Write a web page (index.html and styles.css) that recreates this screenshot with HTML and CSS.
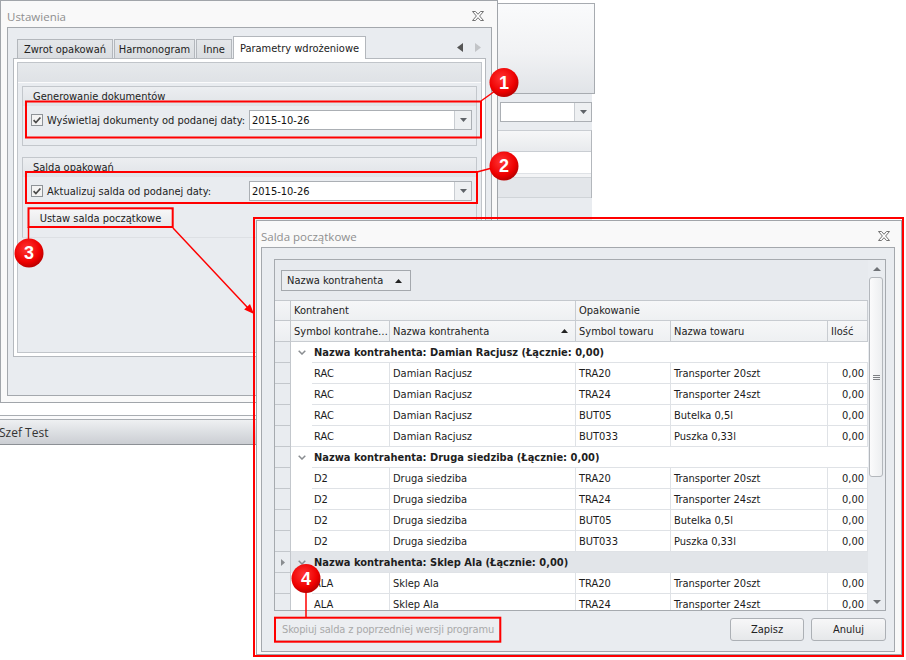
FILE: index.html
```html
<!DOCTYPE html>
<html lang="pl">
<head>
<meta charset="utf-8">
<title>Salda początkowe</title>
<link rel="stylesheet" href="styles.css">
</head>
<body>
<div class="desk">

  <!-- background application window -->
  <div class="app">
    <div class="ribbon"></div>
    <div class="app-body">
      <div class="app-form">
        <div class="app-combo"><span class="app-combo-btn"><svg width="7" height="4" viewBox="0 0 7 4"><path d="M0 0h7L3.5 4z" fill="#5f6368"/></svg></span></div>
        <div class="app-grid">
          <div class="ag-head"></div>
          <div class="ag-row"></div>
          <div class="ag-gap"></div>
          <div class="ag-group"></div>
        </div>
      </div>
    </div>
    <div class="statusbar"><div class="sb-inner">Szef Test</div></div>
  </div>

  <!-- Ustawienia dialog -->
  <div class="dlg settings">
    <div class="dlg-title">
      <span>Ustawienia</span>
      <svg class="x-ico" width="12" height="10" viewBox="0 0 12 10"><path d="M0.5 0.5h3l2.5 2.8 2.5-2.8h3L7.6 5l3.9 4.5h-3L6 6.7 3.5 9.5h-3L4.4 5z" fill="#fff" stroke="#727272" stroke-width="1" stroke-linejoin="round"/></svg>
    </div>
    <div class="panel">
      <div class="tabs">
        <div class="tab t1">Zwrot opakowań</div>
        <div class="tab t2">Harmonogram</div>
        <div class="tab t3">Inne</div>
        <div class="tab t4 active">Parametry wdrożeniowe</div>
        <div class="tab-nav">
          <svg width="6" height="9" viewBox="0 0 6 9"><path d="M6 0v9L0 4.5z" fill="#555"/></svg>
          <svg width="6" height="9" viewBox="0 0 6 9"><path d="M0 0v9l6-4.5z" fill="#c2c4c7"/></svg>
        </div>
      </div>
      <div class="tabpage">
        <div class="tabpage-in">
          <div class="band"></div>
          <div class="group g1">
            <div class="group-cap">Generowanie dokumentów</div>
            <div class="group-body">
              <div class="opt-row">
                <label class="chk"><svg width="12" height="12" viewBox="0 0 12 12"><rect x="0.5" y="0.5" width="11" height="11" fill="#f3f3f3" stroke="#8e9398"/><path d="M2.6 6.1l2.3 2.4 4.5-5" fill="none" stroke="#4a4a4a" stroke-width="1.7"/></svg>Wyświetlaj dokumenty od podanej daty:</label>
                <div class="combo"><span class="combo-val">2015-10-26</span><span class="combo-btn"><svg width="7" height="4" viewBox="0 0 7 4"><path d="M0 0h7L3.5 4z" fill="#5f6368"/></svg></span></div>
              </div>
            </div>
          </div>
          <div class="group g2">
            <div class="group-cap">Salda opakowań</div>
            <div class="group-body">
              <div class="opt-row">
                <label class="chk"><svg width="12" height="12" viewBox="0 0 12 12"><rect x="0.5" y="0.5" width="11" height="11" fill="#f3f3f3" stroke="#8e9398"/><path d="M2.6 6.1l2.3 2.4 4.5-5" fill="none" stroke="#4a4a4a" stroke-width="1.7"/></svg>Aktualizuj salda od podanej daty:</label>
                <div class="combo"><span class="combo-val">2015-10-26</span><span class="combo-btn"><svg width="7" height="4" viewBox="0 0 7 4"><path d="M0 0h7L3.5 4z" fill="#5f6368"/></svg></span></div>
              </div>
              <button class="btn btn-ustaw">Ustaw salda początkowe</button>
            </div>
          </div>
        </div>
      </div>
    </div>
  </div>

  <!-- Salda początkowe dialog -->
  <div class="dlg saldo">
    <div class="dlg-title">
      <span>Salda początkowe</span>
      <svg class="x-ico" width="12" height="10" viewBox="0 0 12 10"><path d="M0.5 0.5h3l2.5 2.8 2.5-2.8h3L7.6 5l3.9 4.5h-3L6 6.7 3.5 9.5h-3L4.4 5z" fill="#fff" stroke="#727272" stroke-width="1" stroke-linejoin="round"/></svg>
    </div>
    <div class="panel">
      <div class="grid">
        <div class="grid-main">
          <div class="gpanel">
            <div class="gp-box"><span>Nazwa kontrahenta</span><svg width="7" height="4" viewBox="0 0 7 4"><path d="M0 4h7L3.5 0z" fill="#222"/></svg></div>
          </div>
          <div class="hrow band-row">
            <div class="ind"></div>
            <div class="hc w-k">Kontrahent</div>
            <div class="hc w-o">Opakowanie</div>
          </div>
          <div class="hrow col-row">
            <div class="ind"></div>
            <div class="hc c-sym">Symbol kontrahe…</div>
            <div class="hc c-naz"><span>Nazwa kontrahenta</span><svg class="sort" width="7" height="4" viewBox="0 0 7 4"><path d="M0 4h7L3.5 0z" fill="#222"/></svg></div>
            <div class="hc c-st">Symbol towaru</div>
            <div class="hc c-nt">Nazwa towaru</div>
            <div class="hc c-il">Ilość</div>
          </div>
          <div class="gbody">
            <div class="row grp">
              <div class="ind"></div>
              <div class="chev"><svg width="8" height="5" viewBox="0 0 8 5"><path d="M0.7 0.7L4 4l3.3-3.3" fill="none" stroke="#8a8d91" stroke-width="1.5"/></svg></div>
              <div class="gtext">Nazwa kontrahenta: Damian Racjusz (Łącznie: 0,00)</div>
            </div>
            <div class="row drow"><div class="ind"></div><div class="indent"></div><div class="dc d-sym">RAC</div><div class="dc d-naz">Damian Racjusz</div><div class="dc d-st">TRA20</div><div class="dc d-nt">Transporter 20szt</div><div class="dc d-il">0,00</div></div>
            <div class="row drow"><div class="ind"></div><div class="indent"></div><div class="dc d-sym">RAC</div><div class="dc d-naz">Damian Racjusz</div><div class="dc d-st">TRA24</div><div class="dc d-nt">Transporter 24szt</div><div class="dc d-il">0,00</div></div>
            <div class="row drow"><div class="ind"></div><div class="indent"></div><div class="dc d-sym">RAC</div><div class="dc d-naz">Damian Racjusz</div><div class="dc d-st">BUT05</div><div class="dc d-nt">Butelka 0,5l</div><div class="dc d-il">0,00</div></div>
            <div class="row drow last"><div class="ind"></div><div class="indent"></div><div class="dc d-sym">RAC</div><div class="dc d-naz">Damian Racjusz</div><div class="dc d-st">BUT033</div><div class="dc d-nt">Puszka 0,33l</div><div class="dc d-il">0,00</div></div>
            <div class="row grp">
              <div class="ind"></div>
              <div class="chev"><svg width="8" height="5" viewBox="0 0 8 5"><path d="M0.7 0.7L4 4l3.3-3.3" fill="none" stroke="#8a8d91" stroke-width="1.5"/></svg></div>
              <div class="gtext">Nazwa kontrahenta: Druga siedziba (Łącznie: 0,00)</div>
            </div>
            <div class="row drow"><div class="ind"></div><div class="indent"></div><div class="dc d-sym">D2</div><div class="dc d-naz">Druga siedziba</div><div class="dc d-st">TRA20</div><div class="dc d-nt">Transporter 20szt</div><div class="dc d-il">0,00</div></div>
            <div class="row drow"><div class="ind"></div><div class="indent"></div><div class="dc d-sym">D2</div><div class="dc d-naz">Druga siedziba</div><div class="dc d-st">TRA24</div><div class="dc d-nt">Transporter 24szt</div><div class="dc d-il">0,00</div></div>
            <div class="row drow"><div class="ind"></div><div class="indent"></div><div class="dc d-sym">D2</div><div class="dc d-naz">Druga siedziba</div><div class="dc d-st">BUT05</div><div class="dc d-nt">Butelka 0,5l</div><div class="dc d-il">0,00</div></div>
            <div class="row drow last"><div class="ind"></div><div class="indent"></div><div class="dc d-sym">D2</div><div class="dc d-naz">Druga siedziba</div><div class="dc d-st">BUT033</div><div class="dc d-nt">Puszka 0,33l</div><div class="dc d-il">0,00</div></div>
            <div class="row grp focus">
              <div class="ind"><svg width="4" height="7" viewBox="0 0 4 7"><path d="M0 0l4 3.5L0 7z" fill="#8a8d91"/></svg></div>
              <div class="chev"><svg width="8" height="5" viewBox="0 0 8 5"><path d="M0.7 0.7L4 4l3.3-3.3" fill="none" stroke="#8a8d91" stroke-width="1.5"/></svg></div>
              <div class="gtext">Nazwa kontrahenta: Sklep Ala (Łącznie: 0,00)</div>
            </div>
            <div class="row drow"><div class="ind"></div><div class="indent"></div><div class="dc d-sym">ALA</div><div class="dc d-naz">Sklep Ala</div><div class="dc d-st">TRA20</div><div class="dc d-nt">Transporter 20szt</div><div class="dc d-il">0,00</div></div>
            <div class="row drow"><div class="ind"></div><div class="indent"></div><div class="dc d-sym">ALA</div><div class="dc d-naz">Sklep Ala</div><div class="dc d-st">TRA24</div><div class="dc d-nt">Transporter 24szt</div><div class="dc d-il">0,00</div></div>
          </div>
        </div>
        <div class="vscroll">
          <div class="sb-arrow"><svg width="8" height="4" viewBox="0 0 8 4"><path d="M0 4h8L4 0z" fill="#6f7276"/></svg></div>
          <div class="thumb"><svg width="7" height="5" viewBox="0 0 7 5"><path d="M0 0.5h7M0 2.5h7M0 4.5h7" stroke="#7d8084" stroke-width="1"/></svg></div>
          <div class="sb-space"></div>
          <div class="sb-arrow"><svg width="8" height="4" viewBox="0 0 8 4"><path d="M0 0h8L4 4z" fill="#6f7276"/></svg></div>
        </div>
      </div>
      <div class="foot">
        <button class="btn btn-copy">Skopiuj salda z poprzedniej wersji programu</button>
        <button class="btn btn-zap">Zapisz</button>
        <button class="btn btn-anu">Anuluj</button>
      </div>
    </div>
  </div>

  <!-- annotations -->
  <svg class="annot" width="906" height="660" viewBox="0 0 906 660">
    <defs>
      <radialGradient id="rg" cx="0.42" cy="0.36" r="0.66">
        <stop offset="0" stop-color="#ff3535"/>
        <stop offset="0.7" stop-color="#ee0000"/>
        <stop offset="1" stop-color="#b60000"/>
      </radialGradient>
    </defs>
    <g fill="none" stroke="#ff0000" stroke-width="2">
      <rect x="26" y="101.5" width="455" height="36"/>
      <rect x="26" y="172" width="451" height="31"/>
      <rect x="28.5" y="208.3" width="144.2" height="18.7"/>
      <rect x="275" y="617.7" width="225.3" height="24"/>
      <rect x="254" y="218" width="649" height="438"/>
    </g>
    <g stroke="#ff0000" stroke-width="1.5">
      <line x1="481" y1="101" x2="495" y2="91"/>
      <line x1="477" y1="172" x2="492" y2="168"/>
      <line x1="28.5" y1="227" x2="28.5" y2="240"/>
      <line x1="306" y1="592" x2="306" y2="617"/>
      <line x1="173" y1="228" x2="248" y2="308"/>
    </g>
    <polygon points="254,314 244.2,309.4 250,304" fill="#ff0000"/>
    <g class="num">
      <circle cx="504" cy="82.5" r="14.5" fill="url(#rg)"/>
      <text x="504" y="88.8" text-anchor="middle">1</text>
      <circle cx="504" cy="166" r="14.5" fill="url(#rg)"/>
      <text x="504" y="172.3" text-anchor="middle">2</text>
      <circle cx="29" cy="253" r="14.5" fill="url(#rg)"/>
      <text x="29" y="259.3" text-anchor="middle">3</text>
      <circle cx="306" cy="578.5" r="14.5" fill="url(#rg)"/>
      <text x="306" y="584.8" text-anchor="middle">4</text>
    </g>
  </svg>

</div>
</body>
</html>
```

FILE: styles.css
```css
* { box-sizing: border-box; }
html, body { margin: 0; padding: 0; }
body {
  width: 906px; height: 660px; overflow: hidden; background: #fff;
  font-family: "DejaVu Sans Condensed", "DejaVu Sans", sans-serif;
  font-size: 11px; color: #1b1b1b;
}
.desk { position: relative; width: 906px; height: 660px; overflow: hidden; }

/* ---------- background application ---------- */
.app {
  position: absolute; left: -4px; top: 3px; width: 599px; height: 442px;
  display: flex; flex-direction: column; background: #fff;
}
.ribbon {
  height: 91px; flex: none; border: 1px solid #a7abb0;
  background: linear-gradient(#fafbfc, #f1f2f4 55%, #e1e4e8);
}
.app-body { flex: 1; display: flex; justify-content: flex-end; padding-right: 3px; }
.app-form { width: 96px; background: #e9ecf0; padding-top: 8px; }
.app-combo {
  margin-left: 4px; height: 20px; border: 1px solid #abafb4; background: #fff;
  display: flex; justify-content: flex-end;
}
.app-combo-btn {
  width: 17px; border-left: 1px solid #c9cdd2; background: #eef0f2;
  display: flex; align-items: center; justify-content: center;
}
.app-grid { margin-top: 8px; border-right: 1px solid #b3b7bc; border-top: 1px solid #c9cdd2; }
.ag-head { height: 21px; border-bottom: 1px solid #c9cdd2; background: linear-gradient(#f6f7f8, #e8eaed); }
.ag-row { height: 22px; background: #fff; border-bottom: 1px solid #dfe2e6; }
.ag-gap { height: 4px; background: #f3f4f6; border-bottom: 1px solid #d0d4d8; }
.ag-group { height: 20px; background: #e3e6ea; border-bottom: 1px solid #d0d4d8; }
.statusbar { height: 30px; flex: none; border-top: 1px solid #a9adb2; padding-top: 3px; background: #fbfbfc; }
.sb-inner {
  height: 100%; border-top: 1px solid #a9adb2; border-bottom: 1px solid #8c9095;
  background: linear-gradient(#eef0f2, #cbced3); padding-left: 3px;
  display: flex; align-items: center;
  font-family: "Open Sans", sans-serif; font-size: 12px; color: #333;
}

/* ---------- dialogs ---------- */
.dlg {
  position: absolute; display: flex; flex-direction: column;
  border: 1px solid #a1a5aa; background: #f9f9f9;
}
.settings { left: 0; top: 0; width: 498px; height: 403px; padding: 0 5px 6px 6px; }
.saldo { left: 256px; top: 220px; width: 646px; height: 435px; padding: 0 6px 2px 4px; }
.dlg-title {
  height: 26px; flex: none; display: flex; align-items: center; justify-content: space-between;
  padding-top: 4px; font-family: "Open Sans", sans-serif; font-size: 11.5px; color: #8f8f8f;
}
.settings .x-ico { margin-right: 8px; }
.saldo .x-ico { margin-right: 5px; }
.panel { flex: 1; min-height: 0; border: 1px solid #a4a8ad; background: #e9ecf0; }
.settings .panel { padding: 8px 5px 0 5px; }

/* tabs */
.tabs { height: 22px; display: flex; align-items: flex-end; padding-left: 4px; gap: 1px; }
.tab {
  height: 19px; border: 1px solid #b3b7bc; border-bottom: none;
  background: linear-gradient(#e4e7ea, #dadde1);
  display: flex; align-items: center; justify-content: center; color: #222;
}
.tab.active { height: 23px; margin-bottom: -1px; background: #fff; position: relative; z-index: 2; }
.t1 { width: 96px; } .t2 { width: 81px; } .t3 { width: 36px; } .t4 { width: 133px; }
.tab-nav { margin-left: auto; margin-right: 5px; align-self: center; display: flex; gap: 12px; padding-top: 1px; }
.tabpage { height: 299px; border: 1px solid #b5b9be; background: #fff; padding: 3px; }
.tabpage-in { height: 100%; border: 1px solid #c1c5ca; background: #e9ecf0; padding: 0 4px; }
.band { height: 20px; margin: 0 -4px; background: linear-gradient(#e6e9ec, #dfe2e6); border-bottom: 1px solid #fbfbfc; }

/* group boxes */
.group { border: 1px solid #c3c7cc; margin-top: 3px; }
.g2 { margin-top: 11px; border-bottom-color: #dde0e4; }
.group-cap {
  height: 19px; padding-left: 10px; display: flex; align-items: center;
  background: linear-gradient(#eceef1, #e0e3e7); color: #222;
}
.group-body { padding: 4px 3px 15px 8px; background: #e9ecf0; }
.g2 .group-body { padding-bottom: 9px; }
.opt-row { display: flex; align-items: center; height: 20px; }
.chk { width: 218px; flex: none; display: flex; align-items: center; gap: 4px; color: #222; }
.chk svg { flex: none; }
.combo {
  width: 223px; height: 20px; border: 1px solid #abafb4; background: #fff;
  display: flex; align-items: center;
}
.combo-val { flex: 1; padding-left: 2px; color: #111; }
.combo-btn {
  width: 17px; height: 100%; border-left: 1px solid #c9cdd2; background: #eef0f2;
  display: flex; align-items: center; justify-content: center;
}

/* buttons */
.btn {
  font-family: inherit; font-size: 11px; color: #222; padding: 0; margin: 0;
  border: 1px solid #acb0b5; border-radius: 3px;
  background: linear-gradient(#f7f7f8, #e6e8ea);
  display: flex; align-items: center; justify-content: center; white-space: nowrap;
}
.btn-ustaw { margin-top: 7px; margin-left: -3px; width: 145px; height: 20px; border-radius: 2px; }
.foot { display: flex; align-items: center; margin-top: 6px; height: 24px; }
.btn-copy {
  margin-left: 1px; width: 225px; height: 24px; border-color: #c9cdd2; border-radius: 1px;
  background: #eceef1; color: #a9a9a9; justify-content: flex-start; text-align: left;
  padding-left: 6px; overflow: hidden; letter-spacing: -0.15px;
}
.btn-zap { margin-left: auto; width: 74px; height: 23px; }
.btn-anu { margin-left: 7px; width: 75px; height: 23px; }

/* grid */
.saldo .panel { padding: 11px 8px 9px 12px; display: flex; flex-direction: column; }
.grid { height: 352px; flex: none; border: 1px solid #a6aaaf; display: flex; background: #fff; }
.grid-main { width: 593px; flex: none; display: flex; flex-direction: column; overflow: hidden; }
.gpanel { height: 41px; flex: none; background: #e7eaee; border-bottom: 1px solid #c4c8cd; padding: 10px 0 0 6px; }
.gp-box {
  width: 130px; height: 21px; border: 1px solid #a4a8ad; background: #ebedf0;
  display: flex; align-items: center; justify-content: space-between; padding: 0 8px 0 5px; color: #222;
}
.hrow { display: flex; flex: none; }
.band-row { height: 20px; }
.col-row { height: 21px; }
.ind {
  width: 16px; flex: none; border-right: 1px solid #c3c7cc; border-bottom: 1px solid #c3c7cc;
  background: #e9ecf0; display: flex; align-items: center; justify-content: center;
}
.hrow .ind { background: linear-gradient(#f4f5f7, #eceef1); }
.hc {
  flex: none; border-right: 1px solid #c8ccd1; border-bottom: 1px solid #c8ccd1;
  background: linear-gradient(#f6f7f8, #eef0f2); padding-left: 3px; color: #222;
  display: flex; align-items: center; white-space: nowrap; overflow: hidden;
}
.w-k { width: 285px; } .w-o { width: 292px; }
.c-sym { width: 99px; } .c-naz { width: 186px; justify-content: space-between; padding-right: 7px; }
.c-st { width: 95px; } .c-nt { width: 157px; } .c-il { width: 40px; }
.gbody { flex: 1; overflow: hidden; }
.row { display: flex; height: 21px; }
.chev { width: 21px; flex: none; display: flex; align-items: center; justify-content: center; padding-left: 1px; }
.gtext {
  flex: 1; border-bottom: 1px solid #dfe2e6; font-weight: bold; padding-left: 2px;
  display: flex; align-items: center; white-space: nowrap; color: #1e1e1e;
}
.grp.focus .chev, .grp.focus .gtext { background: #e2e5e9; }
.indent { width: 21px; flex: none; }
.drow.last .indent { border-bottom: 1px solid #dfe2e6; }
.dc {
  flex: none; border-right: 1px solid #dfe2e6; border-bottom: 1px solid #dfe2e6;
  padding-left: 3px; display: flex; align-items: center; white-space: nowrap; overflow: hidden; color: #1b1b1b;
}
.d-sym { width: 78px; padding-left: 2px; } .d-naz { width: 186px; } .d-st { width: 95px; }
.d-nt { width: 157px; } .d-il { width: 40px; justify-content: flex-end; padding-right: 3px; }

/* scrollbar */
.vscroll { width: 17px; flex: none; background: #e9ecf0; display: flex; flex-direction: column; }
.sb-arrow { height: 17px; flex: none; display: flex; align-items: center; justify-content: center; }
.thumb {
  height: 200px; width: 14px; margin-left: 1px; flex: none;
  border: 1px solid #b3b7bc; border-radius: 3px;
  background: linear-gradient(90deg, #fbfbfc, #eceef0);
  display: flex; align-items: center; justify-content: center;
}
.sb-space { flex: 1; }

/* annotations */
.annot { position: absolute; left: 0; top: 0; }
.num text { font-family: "Liberation Sans", Arial, sans-serif; font-weight: bold; font-size: 18px; fill: #fff; }
```
